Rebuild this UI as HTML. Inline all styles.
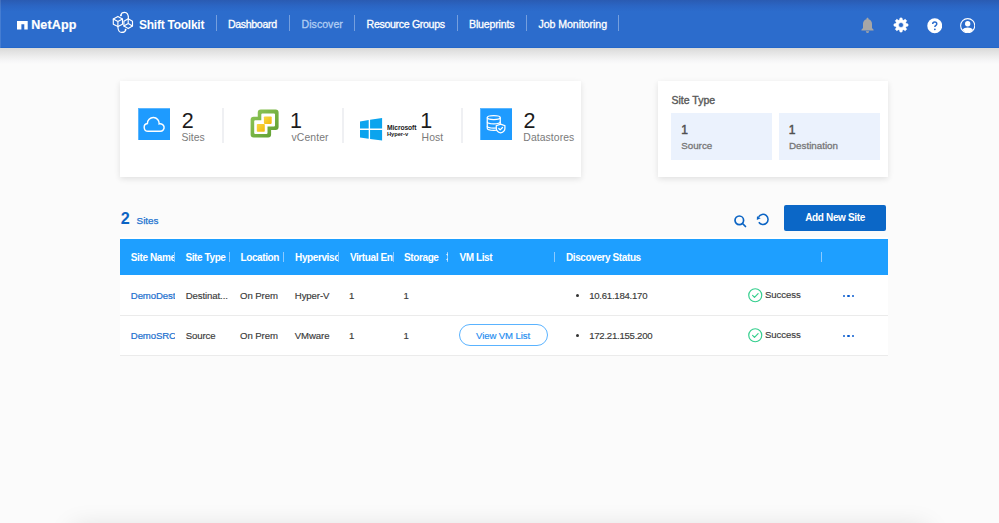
<!DOCTYPE html>
<html><head><meta charset="utf-8"><style>
html,body{margin:0;padding:0}
html,body{width:999px;height:523px;overflow:hidden}
body{background:#fbfbfb;font-family:"Liberation Sans",sans-serif}
#root{position:relative;width:999px;height:523px;overflow:hidden;background:#fbfbfb}
.abs{position:absolute}
.t{position:absolute;line-height:1;white-space:nowrap}
#hdr{position:absolute;left:0;top:0;width:999px;height:48px;background:linear-gradient(#2a5bb2,#2b65c3 12%,#2c6ccc 24%,#2c6ccc 97%,#2064c8);z-index:0}
#hshadow{position:absolute;left:0;top:48px;width:999px;height:16px;background:linear-gradient(#d9d9d8,#e3e3e3 25%,#eeeeee 55%,#f6f6f7 80%,#fbfbfb)}
.sep{background:rgba(255,255,255,0.35)}
.card{position:absolute;background:#fff;box-shadow:0 2px 6px rgba(0,0,0,0.11)}
#foot{position:absolute;left:75px;top:530px;width:850px;height:40px;box-shadow:0 0 26px 2px rgba(0,0,0,0.13)}
</style></head><body><div id="root">
<div id="hdr"></div><div id="hshadow"></div><div class="abs" style="left:0;top:0;width:1px;height:48px;background:rgba(255,255,255,0.12)"></div>
<svg class="abs" style="left:17.1px;top:20.6px" width="11" height="9" viewBox="0 0 11 9"><path d="M0 0H10.7V8.4H7.3V3.3H4.4V8.4H0Z" fill="#fff"/></svg>
<div class="t" style="left:31.20px;top:19.00px;font-size:12.5px;font-weight:700;color:#fff;letter-spacing:0.15px;-webkit-text-stroke:0.2px #fff;">NetApp</div>
<svg class="abs" style="left:111px;top:10px" width="24" height="24" viewBox="0 0 24 24" fill="none" stroke="#fff" stroke-width="1.15" stroke-linejoin="round" stroke-linecap="round">
<path d="M6.9 6.4 L11.5 9 L11.5 14.2 L6.9 16.6 L2.3 14.2 L2.3 9 Z"/>
<path d="M2.3 9 L6.9 11.6 L11.5 9 M6.9 11.6 L6.9 16.6"/>
<path d="M17.2 8.7 L21.5 11.2 L21.5 16 L17.2 18.6 L12.9 16 L12.9 11.2 Z"/>
<path d="M17.2 8.7 L17.2 13.5 L12.9 16 M17.2 13.5 L21.5 16"/>
<path d="M9.9 5.3 C10.2 3.2 11.8 2.4 13.6 2.4 C16 2.4 17.5 4.3 17.4 8.5"/>
<path d="M6.9 16.6 C6.8 20.5 8.6 22.4 10.6 22.4 C12.8 22.4 14.5 21.2 14.6 19.6"/>
<circle cx="9.9" cy="5.4" r="0.9" fill="#fff" stroke="none"/>
<circle cx="14.6" cy="19.7" r="0.9" fill="#fff" stroke="none"/>
</svg>
<div class="t" style="left:139.00px;top:19.00px;font-size:12px;font-weight:700;color:#fff;letter-spacing:-0.25px;">Shift Toolkit</div>
<div class="abs sep" style="left:216.0px;top:15px;width:1px;height:16px"></div>
<div class="abs sep" style="left:289.0px;top:15px;width:1px;height:16px"></div>
<div class="abs sep" style="left:354.0px;top:15px;width:1px;height:16px"></div>
<div class="abs sep" style="left:457.0px;top:15px;width:1px;height:16px"></div>
<div class="abs sep" style="left:526.0px;top:15px;width:1px;height:16px"></div>
<div class="abs sep" style="left:618.0px;top:15px;width:1px;height:16px"></div>
<div class="t" style="left:228.00px;top:19.00px;font-size:10.6px;font-weight:400;color:#fff;letter-spacing:-0.35px;-webkit-text-stroke:0.3px #fff;">Dashboard</div>
<div class="t" style="left:301.60px;top:19.00px;font-size:10.6px;font-weight:400;color:#b0cdf3;letter-spacing:0px;-webkit-text-stroke:0.3px #b0cdf3;">Discover</div>
<div class="t" style="left:366.60px;top:19.00px;font-size:10.6px;font-weight:400;color:#fff;letter-spacing:-0.33px;-webkit-text-stroke:0.3px #fff;">Resource Groups</div>
<div class="t" style="left:469.00px;top:19.00px;font-size:10.6px;font-weight:400;color:#fff;letter-spacing:-0.17px;-webkit-text-stroke:0.3px #fff;">Blueprints</div>
<div class="t" style="left:538.60px;top:19.00px;font-size:10.6px;font-weight:400;color:#fff;letter-spacing:-0.08px;-webkit-text-stroke:0.3px #fff;">Job Monitoring</div>
<svg class="abs" style="left:860px;top:17px" width="15" height="17" viewBox="0 0 15 17"><path d="M7.5 0.8c-0.6 0-1 0.4-1 1v0.5C4.3 2.8 3 4.6 3 7v4l-1.6 1.8v0.7h12.2v-0.7L12 11V7c0-2.4-1.3-4.2-3.5-4.7V1.8c0-0.6-0.4-1-1-1z M5.8 14.2a1.7 1.7 0 0 0 3.4 0z" fill="#a6a6a6"/></svg>
<svg class="abs" style="left:889px;top:13.2px" width="24" height="24" viewBox="0 0 24 24"><path fill="#fff" fill-rule="evenodd" stroke="#fff" stroke-width="0.6" stroke-linejoin="round" d="M10.54 6.91 L11.01 4.97 L12.99 4.97 L13.46 6.91 L14.57 7.36 L16.27 6.33 L17.67 7.73 L16.64 9.43 L17.09 10.54 L19.03 11.01 L19.03 12.99 L17.09 13.46 L16.64 14.57 L17.67 16.27 L16.27 17.67 L14.57 16.64 L13.46 17.09 L12.99 19.03 L11.01 19.03 L10.54 17.09 L9.43 16.64 L7.73 17.67 L6.33 16.27 L7.36 14.57 L6.91 13.46 L4.97 12.99 L4.97 11.01 L6.91 10.54 L7.36 9.43 L6.33 7.73 L7.73 6.33 L9.43 7.36Z M14.5 12 A2.5 2.5 0 1 0 9.5 12 A2.5 2.5 0 1 0 14.5 12Z"/></svg>
<svg class="abs" style="left:926.5px;top:18px" width="15.5" height="15.5" viewBox="0 0 16 16"><circle cx="8" cy="8" r="7.7" fill="#fff"/><path d="M5.9 6.3C5.9 5 6.8 4.2 8 4.2S10.1 5 10.1 6.1C10.1 7.6 8.1 7.6 8.1 9.4" fill="none" stroke="#2c6ccc" stroke-width="1.5"/><circle cx="8.1" cy="11.7" r="0.95" fill="#2c6ccc"/></svg>
<svg class="abs" style="left:960px;top:17.8px" width="15.4" height="15.4" viewBox="0 0 16 16"><circle cx="8" cy="8" r="7.35" fill="none" stroke="#fff" stroke-width="1.1"/><circle cx="8" cy="6" r="2.8" fill="#fff"/><path d="M2.6 12.2C3.7 10.7 5.7 9.9 8 9.9S12.3 10.7 13.4 12.2A7.35 7.35 0 0 1 8 15.35A7.35 7.35 0 0 1 2.6 12.2Z" fill="#fff"/></svg>
<div class="card" style="left:120px;top:81px;width:461px;height:96px"></div>
<div class="abs" style="left:138px;top:108px;width:32px;height:32px;background:#1e9bff;box-shadow:inset 1px 1px 0 #5ab6ff"></div>
<svg class="abs" style="left:138px;top:108px" width="32" height="32" viewBox="0 0 32 32"><path d="M10.1 23.3H22.3A3.8 3.8 0 1 0 21.18 15.87A5.9 5.9 0 1 0 9.4 15.56A3.9 3.9 0 0 0 10.1 23.3Z" fill="none" stroke="#fff" stroke-width="1.45"/></svg>
<div class="t" style="left:181.80px;top:111.00px;font-size:21.5px;font-weight:400;color:#1c1c1c;letter-spacing:0px;">2</div>
<div class="t" style="left:181.50px;top:133.00px;font-size:10.4px;font-weight:400;color:#7a7a7a;letter-spacing:0px;">Sites</div>
<div class="abs" style="left:222px;top:108px;width:2px;height:35px;background:#eff0f3"></div>
<div class="abs" style="left:341.5px;top:108px;width:2px;height:35px;background:#eff0f3"></div>
<div class="abs" style="left:461px;top:108px;width:2px;height:35px;background:#eff0f3"></div>
<svg class="abs" style="left:248px;top:107px" width="34" height="34" viewBox="0 0 34 34">
<defs><linearGradient id="gy" x1="0" y1="0" x2="1" y2="1"><stop offset="0" stop-color="#f7d843"/><stop offset="1" stop-color="#f1b80e"/></linearGradient>
<linearGradient id="gg" x1="0" y1="0" x2="1" y2="1"><stop offset="0" stop-color="#92c95a"/><stop offset="1" stop-color="#5c9c2e"/></linearGradient></defs>
<path d="M12.75 2.6H27.6A3 3 0 0 1 30.6 5.6V20.1A3 3 0 0 1 27.6 23.1H23.1V27.6A3 3 0 0 1 20.1 30.6H5.6A3 3 0 0 1 2.6 27.6V12.75A3 3 0 0 1 5.6 9.75H9.75V5.6A3 3 0 0 1 12.75 2.6Z" fill="url(#gg)"/>
<path d="M14.3 6.5H26A1 1 0 0 1 27 7.5V18.5A1 1 0 0 1 26 19.5H19.5V26A1 1 0 0 1 18.5 27H7.2A1 1 0 0 1 6.2 26V14.3A1 1 0 0 1 7.2 13.3H13.3V7.5A1 1 0 0 1 14.3 6.5Z" fill="#fff"/>
<rect x="15.9" y="9.4" width="7.8" height="7.5" rx="0.8" fill="url(#gy)"/>
<rect x="8.8" y="17" width="8" height="7.7" rx="0.8" fill="url(#gy)"/>
</svg>
<div class="t" style="left:290.00px;top:111.00px;font-size:21.5px;font-weight:400;color:#1c1c1c;letter-spacing:0px;">1</div>
<div class="t" style="left:291.50px;top:133.00px;font-size:10.4px;font-weight:400;color:#7a7a7a;letter-spacing:0.1px;">vCenter</div>
<svg class="abs" style="left:359px;top:117px" width="25" height="25" viewBox="0 0 25 25">
<path d="M1 4.46L9.7 3V11.6H1Z M11.06 2.7L23.1 1.1V11.6H11.06Z M1 13.1H9.7V21.7L1 20.5Z M11.06 13.1H23.1V23.5L11.06 22Z" fill="#0ba4ee"/></svg>
<div class="t" style="left:386.90px;top:124.00px;font-size:7.8px;font-weight:700;color:#1a1a1a;letter-spacing:-0.1px;transform:scaleX(0.86);transform-origin:0 0;">Microsoft</div>
<div class="t" style="left:386.90px;top:132.00px;font-size:5.8px;font-weight:700;color:#1a1a1a;letter-spacing:-0.05px;">Hyper-v</div>
<div class="t" style="left:420.20px;top:111.00px;font-size:21.5px;font-weight:400;color:#1c1c1c;letter-spacing:0px;">1</div>
<div class="t" style="left:421.60px;top:133.00px;font-size:10.4px;font-weight:400;color:#7a7a7a;letter-spacing:0.1px;">Host</div>
<div class="abs" style="left:480px;top:108px;width:32px;height:32px;background:#1e9bff;box-shadow:inset 1px 1px 0 #5ab6ff"></div>
<svg class="abs" style="left:480px;top:108px" width="32" height="32" viewBox="0 0 32 32" fill="none" stroke="#fff" stroke-width="1.25">
<ellipse cx="13.75" cy="9.5" rx="6.5" ry="2"/>
<path d="M7.25 9.5V20.2C7.25 21.4 10 22.3 13.75 22.3C17.5 22.3 20.25 21.4 20.25 20.2V9.5"/>
<path d="M7.25 13.8C7.25 15 10 15.9 13.75 15.9C17.5 15.9 20.25 15 20.25 13.8"/>
<path d="M7.25 17.9C7.25 19.1 10 20 13.75 20C17.5 20 20.25 19.1 20.25 17.9"/>
<path d="M20.6 16.2L24.9 17.7V20.5C24.9 22.7 23.1 24.2 20.6 24.9C18.1 24.2 16.3 22.7 16.3 20.5V17.7Z" fill="#1e9bff"/>
<path d="M18.8 20.5L20.2 21.9L22.5 19.5" stroke-linecap="round" stroke-linejoin="round"/>
</svg>
<div class="t" style="left:523.60px;top:111.00px;font-size:21.5px;font-weight:400;color:#1c1c1c;letter-spacing:0px;">2</div>
<div class="t" style="left:523.30px;top:133.00px;font-size:10.4px;font-weight:400;color:#7a7a7a;letter-spacing:0.08px;">Datastores</div>
<div class="card" style="left:658px;top:81px;width:230px;height:96px"></div>
<div class="t" style="left:671.50px;top:95.00px;font-size:10.5px;font-weight:400;color:#5a5a5a;letter-spacing:0px;-webkit-text-stroke:0.4px #5a5a5a;">Site Type</div>
<div class="abs" style="left:671px;top:113px;width:101px;height:47px;background:#ebf2fd"></div>
<div class="abs" style="left:779px;top:113px;width:101px;height:47px;background:#ebf2fd"></div>
<div class="t" style="left:681.30px;top:124.00px;font-size:12px;font-weight:400;color:#505050;letter-spacing:0px;-webkit-text-stroke:0.45px #505050;">1</div>
<div class="t" style="left:681.20px;top:141.00px;font-size:9.8px;font-weight:400;color:#777;letter-spacing:0px;-webkit-text-stroke:0.3px #777;">Source</div>
<div class="t" style="left:788.80px;top:124.00px;font-size:12px;font-weight:400;color:#505050;letter-spacing:0px;-webkit-text-stroke:0.45px #505050;">1</div>
<div class="t" style="left:789.00px;top:141.00px;font-size:9.8px;font-weight:400;color:#777;letter-spacing:0px;-webkit-text-stroke:0.3px #777;">Destination</div>
<div class="t" style="left:120.70px;top:210.00px;font-size:16.2px;font-weight:700;color:#0b64c4;letter-spacing:-0.5px;">2</div>
<div class="t" style="left:136.60px;top:216.00px;font-size:9.9px;font-weight:400;color:#1c72cf;letter-spacing:0px;-webkit-text-stroke:0.25px #1c72cf;">Sites</div>
<svg class="abs" style="left:733px;top:213px" width="15" height="15" viewBox="0 0 15 15" fill="none" stroke="#0b64c4" stroke-width="1.7" stroke-linecap="round"><circle cx="6.3" cy="7.3" r="4.3"/><path d="M9.5 10.5l3 3"/></svg>
<svg class="abs" style="left:754px;top:211px" width="18" height="18" viewBox="0 0 18 18"><path d="M4.81 11.22A5.05 5.05 0 1 0 4.63 5.87" fill="none" stroke="#0b64c4" stroke-width="1.55"/><path d="M2.8 8.9L3.0 5.3L6.7 7.3Z" fill="#0b64c4"/></svg>
<div class="abs" style="left:784px;top:204.5px;width:101.5px;height:26px;background:#0b67c7;border-radius:2px"></div>
<div class="t" style="left:805.20px;top:213.00px;font-size:10px;font-weight:700;color:#fff;letter-spacing:-0.35px;">Add New Site</div>
<div class="abs" style="left:120px;top:237px;width:768px;height:118.5px;background:#fff"></div>
<div class="abs" style="left:120px;top:238.8px;width:768px;height:36px;background:#1e9fff"></div>
<div class="abs" style="left:130.0px;top:240px;width:44.9px;height:34px;overflow:hidden"><div class="t" style="left:0.80px;top:13.00px;font-size:10px;font-weight:700;color:#fff;letter-spacing:-0.4px;">Site Name</div>
</div>
<div class="abs" style="left:184.6px;top:240px;width:44.6px;height:34px;overflow:hidden"><div class="t" style="left:0.80px;top:13.00px;font-size:10px;font-weight:700;color:#fff;letter-spacing:-0.4px;">Site Type</div>
</div>
<div class="abs" style="left:239.7px;top:240px;width:44.1px;height:34px;overflow:hidden"><div class="t" style="left:0.80px;top:13.00px;font-size:10px;font-weight:700;color:#fff;letter-spacing:-0.4px;">Location</div>
</div>
<div class="abs" style="left:294.3px;top:240px;width:44.6px;height:34px;overflow:hidden"><div class="t" style="left:0.80px;top:13.00px;font-size:10px;font-weight:700;color:#fff;letter-spacing:-0.4px;">Hypervisor</div>
</div>
<div class="abs" style="left:349.1px;top:240px;width:44.2px;height:34px;overflow:hidden"><div class="t" style="left:0.80px;top:13.00px;font-size:10px;font-weight:700;color:#fff;letter-spacing:-0.4px;">Virtual Environment</div>
</div>
<div class="t" style="left:404.10px;top:253.00px;font-size:10px;font-weight:700;color:#fff;letter-spacing:-0.4px;">Storage</div>
<div class="t" style="left:459.40px;top:253.00px;font-size:10px;font-weight:700;color:#fff;letter-spacing:-0.4px;">VM List</div>
<div class="t" style="left:566.00px;top:253.00px;font-size:10px;font-weight:700;color:#fff;letter-spacing:-0.4px;">Discovery Status</div>
<div class="abs" style="left:174.4px;top:252px;width:1px;height:10px;background:#8ccaff"></div>
<div class="abs" style="left:228.6px;top:252px;width:1px;height:10px;background:#8ccaff"></div>
<div class="abs" style="left:283.2px;top:252px;width:1px;height:10px;background:#8ccaff"></div>
<div class="abs" style="left:338.4px;top:252px;width:1px;height:10px;background:#8ccaff"></div>
<div class="abs" style="left:392.8px;top:252px;width:1px;height:10px;background:#8ccaff"></div>
<div class="abs" style="left:554.0px;top:252px;width:1px;height:10px;background:#8ccaff"></div>
<div class="abs" style="left:820.8px;top:252px;width:1px;height:10px;background:#8ccaff"></div>
<div class="abs" style="left:447px;top:252px;width:1px;height:10px;background:#8ccaff"></div><svg class="abs" style="left:445px;top:252px" width="4" height="10" viewBox="0 0 4 10"><path d="M3 1.2L3 4L1 2.6Z M3 6L3 8.8L1 7.4Z" fill="#d8eeff"/></svg>
<div class="abs" style="left:120px;top:315px;width:768px;height:1px;background:#ebebeb"></div>
<div class="abs" style="left:120px;top:355px;width:768px;height:1px;background:#ebebeb"></div>
<div class="abs" style="left:128px;top:286.8px;width:47px;height:16px;overflow:hidden"><div class="t" style="left:2.80px;top:4.00px;font-size:9.6px;font-weight:400;color:#1b6fce;letter-spacing:-0.1px;-webkit-text-stroke:0.2px #1b6fce;">DemoDest</div>
</div>
<div class="t" style="left:185.70px;top:291.00px;font-size:9.6px;font-weight:400;color:#3a3a3a;letter-spacing:-0.1px;-webkit-text-stroke:0.15px #3a3a3a;">Destinat...</div>
<div class="t" style="left:240.10px;top:291.00px;font-size:9.6px;font-weight:400;color:#3a3a3a;letter-spacing:-0.1px;-webkit-text-stroke:0.15px #3a3a3a;">On Prem</div>
<div class="t" style="left:294.80px;top:291.00px;font-size:9.6px;font-weight:400;color:#3a3a3a;letter-spacing:-0.1px;-webkit-text-stroke:0.15px #3a3a3a;">Hyper-V</div>
<div class="t" style="left:349.00px;top:291.00px;font-size:9.6px;font-weight:400;color:#3a3a3a;letter-spacing:0px;-webkit-text-stroke:0.15px #3a3a3a;">1</div>
<div class="t" style="left:403.50px;top:291.00px;font-size:9.6px;font-weight:400;color:#3a3a3a;letter-spacing:0px;-webkit-text-stroke:0.15px #3a3a3a;">1</div>
<div class="abs" style="left:575.8px;top:294.0px;width:3px;height:3px;border-radius:50%;background:#333"></div>
<div class="t" style="left:589.20px;top:291.00px;font-size:9.6px;font-weight:400;color:#3a3a3a;letter-spacing:-0.25px;-webkit-text-stroke:0.15px #3a3a3a;">10.61.184.170</div>
<svg class="abs" style="left:748px;top:288.3px" width="14.5" height="14.5" viewBox="0 0 14.5 14.5" fill="none" stroke="#35cf8e" stroke-width="1.2"><circle cx="7.25" cy="7.25" r="6.5"/><path d="M4.6 7.4l1.9 1.9 3.6-3.6" stroke-linecap="round" stroke-linejoin="round"/></svg>
<div class="t" style="left:764.90px;top:290.00px;font-size:9.6px;font-weight:400;color:#3a3a3a;letter-spacing:-0.05px;-webkit-text-stroke:0.15px #3a3a3a;">Success</div>
<div class="abs" style="left:843.1px;top:294.9px;width:2.2px;height:2.2px;border-radius:50%;background:#0a5ccf"></div>
<div class="abs" style="left:847.4px;top:294.9px;width:2.2px;height:2.2px;border-radius:50%;background:#0a5ccf"></div>
<div class="abs" style="left:851.7px;top:294.9px;width:2.2px;height:2.2px;border-radius:50%;background:#0a5ccf"></div>
<div class="abs" style="left:128px;top:326.7px;width:47px;height:16px;overflow:hidden"><div class="t" style="left:2.80px;top:4.00px;font-size:9.6px;font-weight:400;color:#1b6fce;letter-spacing:-0.1px;-webkit-text-stroke:0.2px #1b6fce;">DemoSRC</div>
</div>
<div class="t" style="left:185.70px;top:331.00px;font-size:9.6px;font-weight:400;color:#3a3a3a;letter-spacing:-0.1px;-webkit-text-stroke:0.15px #3a3a3a;">Source</div>
<div class="t" style="left:240.10px;top:331.00px;font-size:9.6px;font-weight:400;color:#3a3a3a;letter-spacing:-0.1px;-webkit-text-stroke:0.15px #3a3a3a;">On Prem</div>
<div class="t" style="left:294.80px;top:331.00px;font-size:9.6px;font-weight:400;color:#3a3a3a;letter-spacing:-0.1px;-webkit-text-stroke:0.15px #3a3a3a;">VMware</div>
<div class="t" style="left:349.00px;top:331.00px;font-size:9.6px;font-weight:400;color:#3a3a3a;letter-spacing:0px;-webkit-text-stroke:0.15px #3a3a3a;">1</div>
<div class="t" style="left:403.50px;top:331.00px;font-size:9.6px;font-weight:400;color:#3a3a3a;letter-spacing:0px;-webkit-text-stroke:0.15px #3a3a3a;">1</div>
<div class="abs" style="left:575.8px;top:333.8px;width:3px;height:3px;border-radius:50%;background:#333"></div>
<div class="t" style="left:589.20px;top:331.00px;font-size:9.6px;font-weight:400;color:#3a3a3a;letter-spacing:-0.25px;-webkit-text-stroke:0.15px #3a3a3a;">172.21.155.200</div>
<svg class="abs" style="left:748px;top:328.1px" width="14.5" height="14.5" viewBox="0 0 14.5 14.5" fill="none" stroke="#35cf8e" stroke-width="1.2"><circle cx="7.25" cy="7.25" r="6.5"/><path d="M4.6 7.4l1.9 1.9 3.6-3.6" stroke-linecap="round" stroke-linejoin="round"/></svg>
<div class="t" style="left:764.90px;top:330.00px;font-size:9.6px;font-weight:400;color:#3a3a3a;letter-spacing:-0.05px;-webkit-text-stroke:0.15px #3a3a3a;">Success</div>
<div class="abs" style="left:843.1px;top:334.7px;width:2.2px;height:2.2px;border-radius:50%;background:#0a5ccf"></div>
<div class="abs" style="left:847.4px;top:334.7px;width:2.2px;height:2.2px;border-radius:50%;background:#0a5ccf"></div>
<div class="abs" style="left:851.7px;top:334.7px;width:2.2px;height:2.2px;border-radius:50%;background:#0a5ccf"></div>
<div class="abs" style="left:458.8px;top:324px;width:89.2px;height:21.8px;box-sizing:border-box;border:1px solid #5ab3ff;border-radius:11px"></div>
<div class="t" style="left:476.00px;top:331.00px;font-size:9.6px;font-weight:400;color:#238cf0;letter-spacing:-0.1px;-webkit-text-stroke:0.15px #238cf0;">View VM List</div>
<div id="foot"></div>
</div></body></html>
